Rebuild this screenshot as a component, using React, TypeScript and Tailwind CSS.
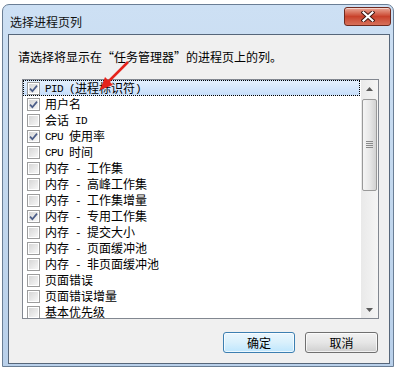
import React from "react";

const items: [string, boolean][] = [
  ["PID (进程标识符)", true],
  ["用户名", true],
  ["会话 ID", false],
  ["CPU 使用率", true],
  ["CPU 时间", false],
  ["内存 - 工作集", false],
  ["内存 - 高峰工作集", false],
  ["内存 - 工作集增量", false],
  ["内存 - 专用工作集", true],
  ["内存 - 提交大小", false],
  ["内存 - 页面缓冲池", false],
  ["内存 - 非页面缓冲池", false],
  ["页面错误", false],
  ["页面错误增量", false],
  ["基本优先级", false],
];

// latin bits get a narrow mono face, like SimSun's half-width glyphs
function Label({ text }: { text: string }) {
  const parts = text.split(/([\x20-\x7e]+)/).filter(Boolean);
  return (
    <span className="whitespace-pre">
      {parts.map((p, i) =>
        /^[\x20-\x7e]+$/.test(p) ? (
          <span key={i} className="font-['Liberation_Mono',monospace] text-[11px] tracking-[-0.6px] align-[1px]">
            {p}
          </span>
        ) : (
          <span key={i}>{p}</span>
        )
      )}
    </span>
  );
}

function Check({ checked }: { checked: boolean }) {
  return (
    <span className="w-[13px] h-[13px] shrink-0 border border-[#9c9c9c] bg-white p-[1px] flex">
      <span className="flex-1 bg-linear-to-br from-[#d6d6d6] to-[#f7f7f7] flex items-center justify-center">
        {checked && (
          <svg width="9" height="9" viewBox="0 0 9 9">
            <path d="M1 4.6 L3.4 7.2 L8 1.6" fill="none" stroke="#4b5d88" strokeWidth="1.7" />
          </svg>
        )}
      </span>
    </span>
  );
}

function Scrollbar() {
  return (
    <div className="w-[17px] flex flex-col bg-linear-to-r from-[#e9e9e9] to-[#f5f5f5]">
      <div className="h-[17px] flex items-center justify-center">
        <svg width="7" height="4" viewBox="0 0 7 4">
          <path d="M0 4 L3.5 0 L7 4Z" fill="#5a5a5a" />
        </svg>
      </div>
      <div className="mx-[1px] mt-[2px] h-[92px] rounded-[2px] border border-[#999999] bg-linear-to-r from-[#f5f5f5] via-[#e8e8e8] to-[#d2d2d2] flex items-center justify-center">
        <svg width="7" height="8" viewBox="0 0 7 8">
          <path d="M0 0.5H7M0 2.5H7M0 4.5H7M0 6.5H7" stroke="#8a8a8a" strokeWidth="1" />
        </svg>
      </div>
      <div className="flex-1" />
      <div className="h-[17px] flex items-center justify-center">
        <svg width="7" height="4" viewBox="0 0 7 4">
          <path d="M0 0 L3.5 4 L7 0Z" fill="#5a5a5a" />
        </svg>
      </div>
    </div>
  );
}

export default function App() {
  return (
    <div className="relative w-[395px] h-[370px] bg-white overflow-hidden pt-[4px] pl-[2px] font-['Noto_Sans_CJK_SC','Noto_Sans',sans-serif] text-[12px] text-black">
      {/* window frame */}
      <div className="w-[392px] h-[363px] flex flex-col rounded-t-[7px] border border-[#6a7e95] bg-linear-to-b from-[#cde0f4] via-[#c3d8ee] to-[#b9d0ea] pl-[5px] pr-[3px] pb-[2px]">
        {/* title bar */}
        <div className="h-[29px] flex items-start justify-between">
          <span className="mt-[9px] ml-[2px] leading-[16px] text-[#111]">选择进程页列</span>
          <div className="mt-[2px] -mr-[1px] w-[47px] h-[19px] rounded-[3px] border border-[#6e2a1f] bg-linear-to-b from-[#e9a797] via-[#c8412b] to-[#d7705a] flex items-center justify-center shadow-[inset_0_1px_0_rgba(255,255,255,0.5)]">
            <svg width="14" height="11" viewBox="0 0 14 11">
              <path d="M2.5 1.5 L11.5 9.5 M11.5 1.5 L2.5 9.5" stroke="#3b1510" strokeWidth="4" strokeLinecap="square" />
              <path d="M2.5 1.5 L11.5 9.5 M11.5 1.5 L2.5 9.5" stroke="#ffffff" strokeWidth="2.2" strokeLinecap="square" />
            </svg>
          </div>
        </div>

        {/* client area */}
        <div className="flex-1 flex flex-col border border-[#56667a] bg-[#f0f0f0]">
          <p className="mt-[14px] ml-[9px] leading-[16px]">请选择将显示在“任务管理器”的进程页上的列。</p>

          <div className="ml-[13px] mt-[14px] w-[357px] h-[240px] border border-[#828790] bg-white flex">
            <div className="flex-1 overflow-hidden">
              {items.map(([label, checked], i) => (
                <div
                  key={label}
                  className={
                    i === 0
                      ? "h-[16px] mr-[1px] flex items-center gap-[5px] pl-[3px] border border-dotted border-black bg-linear-to-b from-[#e3effd] to-[#c7defa] leading-[16px]"
                      : "h-[16px] flex items-center gap-[5px] pl-[4px] leading-[16px]"
                  }
                >
                  <Check checked={checked} />
                  <Label text={label} />
                </div>
              ))}
            </div>
            <Scrollbar />
          </div>

          <div className="mt-[13px] flex justify-end gap-[10px] pr-[11px]">
            <button className="w-[72px] h-[21px] rounded-[3px] border border-[#3c7fb1] bg-linear-to-b from-[#eaf6fd] via-[#d9f0fc] to-[#bee6fd] shadow-[inset_0_0_0_1px_rgba(255,255,255,0.7)] leading-[16px]">
              确定
            </button>
            <button className="w-[73px] h-[21px] rounded-[3px] border border-[#707070] bg-linear-to-b from-[#f2f2f2] via-[#e6e6e6] to-[#cfcfcf] shadow-[inset_0_0_0_1px_rgba(255,255,255,0.7)] leading-[16px]">
              取消
            </button>
          </div>
        </div>
      </div>

      {/* red annotation arrow */}
      <svg className="absolute left-0 top-0 pointer-events-none" width="395" height="370">
        <path d="M128 62 L107 83" stroke="#e5231b" strokeWidth="2.5" />
        <path d="M100 90 L105 77 L113 85 Z" fill="#e5231b" />
      </svg>
    </div>
  );
}
